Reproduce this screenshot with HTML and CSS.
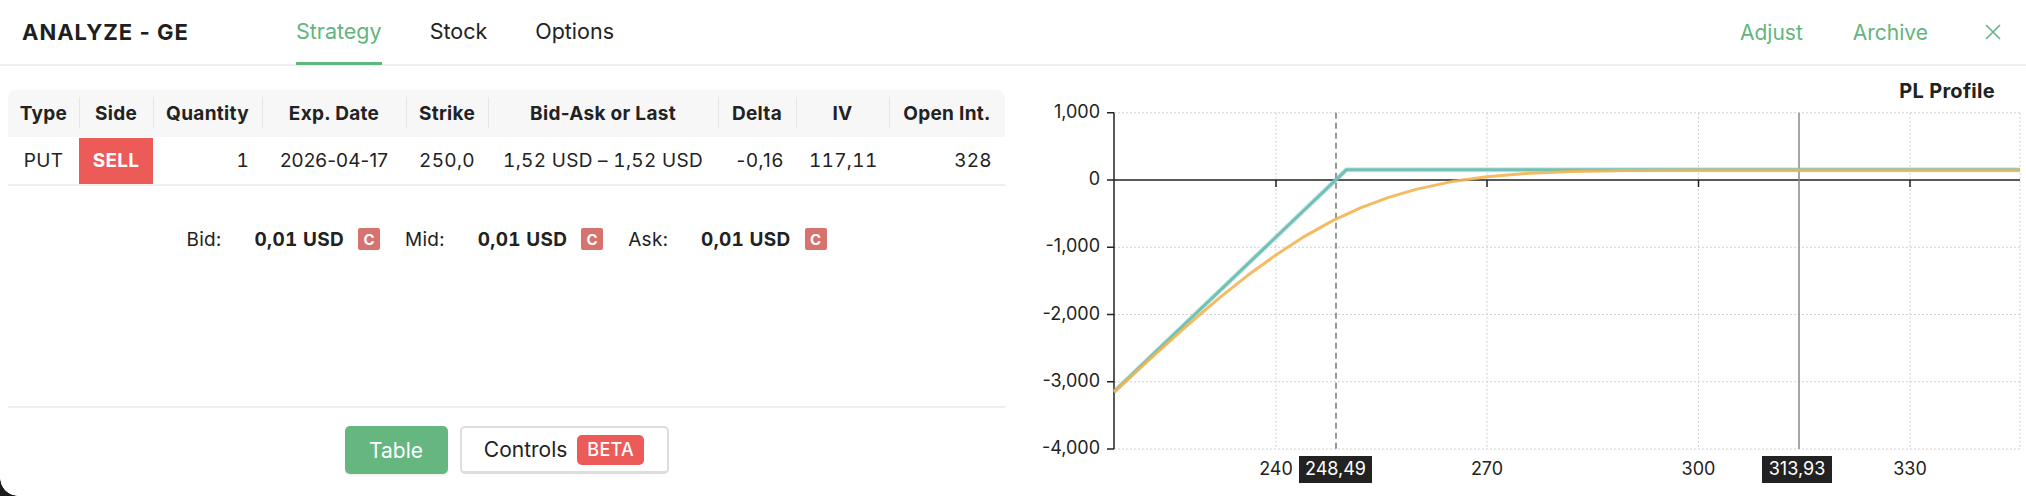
FILE: index.html
```html
<!DOCTYPE html>
<html>
<head>
<meta charset="utf-8">
<link rel="stylesheet" href="styles.css">
</head>
<body>
<div class="app">
  <header class="topbar">
    <div class="title">ANALYZE - GE</div>
    <nav class="tabs">
      <a class="tab active">Strategy</a>
      <a class="tab">Stock</a>
      <a class="tab">Options</a>
    </nav>
    <div class="actions">
      <a class="action">Adjust</a>
      <a class="action">Archive</a>
      <a class="close" aria-label="close">
        <svg width="16" height="16" viewBox="0 0 16 16"><path d="M1 1 L15 15 M15 1 L1 15" stroke="#62b57e" stroke-width="1.6" fill="none"/></svg>
      </a>
    </div>
  </header>
  <main class="main">
    <section class="left">
      <table class="legs">
        <colgroup>
          <col class="c-type"><col class="c-side"><col class="c-qty"><col class="c-date"><col class="c-strike"><col class="c-bidask"><col class="c-delta"><col class="c-iv"><col class="c-oi">
        </colgroup>
        <thead>
          <tr>
            <th>Type</th><th class="sep">Side</th><th class="sep">Quantity</th><th class="sep">Exp. Date</th><th class="sep">Strike</th><th class="sep">Bid-Ask or Last</th><th class="sep">Delta</th><th class="sep">IV</th><th class="sep">Open Int.</th>
          </tr>
        </thead>
        <tbody>
          <tr>
            <td class="center">PUT</td>
            <td class="sell">SELL</td>
            <td class="right">1</td>
            <td class="center date">2026-04-17</td>
            <td class="right">250,0</td>
            <td class="center">1,52 USD – 1,52 USD</td>
            <td class="right delta">-0,16</td>
            <td class="right iv">117,11</td>
            <td class="right">328</td>
          </tr>
        </tbody>
      </table>
      <div class="quotes">
        <span class="qlabel">Bid:</span><span class="qval">0,01 USD</span><span class="cbadge">C</span>
        <span class="qlabel">Mid:</span><span class="qval">0,01 USD</span><span class="cbadge">C</span>
        <span class="qlabel">Ask:</span><span class="qval">0,01 USD</span><span class="cbadge">C</span>
      </div>
      <div class="footer">
        <button class="btn btn-primary">Table</button>
        <button class="btn btn-outline">Controls <span class="beta">BETA</span></button>
      </div>
    </section>
    <section class="chart">
      <svg class="plot" width="1006" height="430" viewBox="1020 66 1006 430">
        <text class="chart-title" x="1995" y="93">PL Profile</text>
        <g class="grid">
          <line x1="1114" y1="112.75" x2="2020" y2="112.75"/>
          <line x1="1114" y1="247.25" x2="2020" y2="247.25"/>
          <line x1="1114" y1="314.5" x2="2020" y2="314.5"/>
          <line x1="1114" y1="381.75" x2="2020" y2="381.75"/>
          <line x1="1114" y1="449" x2="2020" y2="449"/>
          <line x1="1276" y1="112.75" x2="1276" y2="449"/>
          <line x1="1487" y1="112.75" x2="1487" y2="449"/>
          <line x1="1698.5" y1="112.75" x2="1698.5" y2="449"/>
          <line x1="1910" y1="112.75" x2="1910" y2="449"/>
          <line x1="2020" y1="112.75" x2="2020" y2="449"/>
        </g>
        <g class="axis">
          <line x1="1114" y1="112.75" x2="1114" y2="449"/>
          <line x1="1114" y1="180" x2="2020" y2="180"/>
          <line x1="1107" y1="112.75" x2="1114" y2="112.75"/>
          <line x1="1107" y1="180" x2="1114" y2="180"/>
          <line x1="1107" y1="247.25" x2="1114" y2="247.25"/>
          <line x1="1107" y1="314.5" x2="1114" y2="314.5"/>
          <line x1="1107" y1="381.75" x2="1114" y2="381.75"/>
          <line x1="1107" y1="449" x2="1114" y2="449"/>
          <line x1="1276" y1="180" x2="1276" y2="187"/>
          <line x1="1487" y1="180" x2="1487" y2="187"/>
          <line x1="1698.5" y1="180" x2="1698.5" y2="187"/>
          <line x1="1910" y1="180" x2="1910" y2="187"/>
        </g>
        <g class="ylabels">
          <text x="1100" y="113">1,000</text>
          <text x="1100" y="180">0</text>
          <text x="1100" y="247">-1,000</text>
          <text x="1100" y="315">-2,000</text>
          <text x="1100" y="382">-3,000</text>
          <text x="1100" y="449">-4,000</text>
        </g>
        <g class="xlabels">
          <text x="1276" y="470">240</text>
          <text x="1487" y="470">270</text>
          <text x="1698.5" y="470">300</text>
          <text x="1910" y="470">330</text>
        </g>
        <line class="breakeven" x1="1336" y1="112.75" x2="1336" y2="449"/>
        <line class="spot" x1="1799" y1="112.75" x2="1799" y2="449"/>
        <path class="teal-halo" d="M1114,391.7 L1346.4,169.8 L2020,169.8"/>
        <path class="teal" d="M1114,391.7 L1346.4,169.8 L2020,169.8"/>
        <path class="orange" d="M1114,392.2 L1149.3,359.6 L1184.5,327.8 L1219.7,297.7 L1247.8,275.3 L1276,254.9 L1304.2,236.6 L1332.3,220.9 L1360.5,207.8 L1388.6,197.4 L1416.8,189.1 L1452,181.6 L1487,176.8 L1529.4,173.3 L1571.7,171.4 L1628,170.5 L1698.5,170.3 L2020,170.3"/>
        <g class="marker">
          <rect x="1299" y="456" width="73" height="27"/>
          <text x="1335.5" y="470">248,49</text>
          <rect x="1762" y="456" width="70" height="27"/>
          <text x="1797" y="470">313,93</text>
        </g>
      </svg>
    </section>
  </main>
  <div class="corner"></div>
</div>
</body>
</html>
```

FILE: styles.css
```css
* { box-sizing: border-box; }
html, body { margin: 0; padding: 0; background: #fff; }
body {
  font-family: Inter, "Noto Sans", "Liberation Sans", sans-serif;
  color: #222;
  width: 2026px;
  height: 496px;
  overflow: hidden;
}
.app { position: relative; width: 2026px; height: 496px; display: flex; flex-direction: column; }

.topbar {
  height: 66px;
  flex: none;
  display: flex;
  align-items: flex-start;
  border-bottom: 2px solid #eeeeee;
  padding: 0 25px 0 22px;
}
.title {
  font-size: 22px;
  font-weight: 700;
  letter-spacing: 1px;
  line-height: 64px;
  width: 274px;
  color: #1f1f1f;
}
.tabs { display: flex; gap: 48px; }
.tab {
  display: block;
  height: 65px;
  line-height: 62px;
  font-size: 21.5px;
  color: #222;
  border-bottom: 3px solid transparent;
}
.tab.active { color: #62b57e; border-bottom-color: #62b57e; }
.actions { margin-left: auto; display: flex; align-items: center; height: 64px; }
.action { font-size: 21px; color: #62b57e; margin-right: 50px; }
.action + .action { margin-right: 57px; }
.close { display: flex; align-items: center; }

.main { flex: 1; display: flex; min-height: 0; }
.left {
  width: 1020px;
  padding: 24px 15px 22px 8px;
  display: flex;
  flex-direction: column;
}
.legs {
  width: 997px;
  border-collapse: collapse;
  table-layout: fixed;
  font-size: 19px;
  letter-spacing: 0.3px;
  font-variant-numeric: tabular-nums;
}
.c-type { width: 71px; } .c-side { width: 74px; } .c-qty { width: 109px; }
.c-date { width: 144px; } .c-strike { width: 82px; } .c-bidask { width: 230px; }
.c-delta { width: 78px; } .c-iv { width: 93px; } .c-oi { width: 116px; }
.legs thead th {
  background: #f7f7f7;
  height: 47px;
  font-weight: 700;
  font-variant-numeric: normal;
  text-align: center;
  padding: 0;
  position: relative;
  white-space: nowrap;
}
.legs thead th:first-child { border-top-left-radius: 8px; }
.legs thead th:last-child { border-top-right-radius: 8px; }
.legs thead th.sep::before {
  content: "";
  position: absolute;
  left: 0;
  top: 7px;
  bottom: 9px;
  width: 1px;
  background: #e6e6e6;
}
.legs tbody td {
  height: 48px;
  padding: 0 13px;
  border-top: 1px solid #fff;
  border-bottom: 2px solid #eeeeee;
  white-space: nowrap;
}
.center { text-align: center; }
.right { text-align: right; }
.legs tbody td.date { font-variant-numeric: normal; letter-spacing: 0.1px; }
.legs tbody td.delta { font-variant-numeric: normal; letter-spacing: 0.8px; padding-right: 12px; }
.legs tbody td.iv { padding-right: 16px; }
.legs tbody td.sell {
  background: #ec5b57;
  color: #fff;
  font-weight: 700;
  text-align: center;
  padding: 0;
}

.quotes {
  margin-top: 38px;
  height: 30px;
  display: flex;
  align-items: center;
  justify-content: center;
  font-size: 19px;
  letter-spacing: 0.3px;
  font-variant-numeric: tabular-nums;
}
.qlabel { margin-right: 33px; }
.qval { font-weight: 700; margin-right: 14px; }
.cbadge {
  width: 22px; height: 22px;
  background: #d7736e;
  color: #fff;
  font-weight: 700;
  font-size: 15px;
  letter-spacing: 0;
  display: inline-flex; align-items: center; justify-content: center;
  border-radius: 2px;
  margin-right: 25px;
}
.cbadge:last-child { margin-right: 0; }

.footer {
  margin-top: auto;
  border-top: 2px solid #eeeeee;
  padding-top: 18px;
  display: flex;
  justify-content: center;
  gap: 12px;
}
.btn {
  height: 48px;
  font-family: inherit;
  font-size: 21px;
  border-radius: 5px;
  display: inline-flex; align-items: center; justify-content: center;
  padding: 0;
}
.btn-primary {
  width: 103px;
  background: #65b77f;
  border: none;
  color: #fff;
  box-shadow: 0 2px 2px rgba(0,0,0,0.06);
}
.btn-outline {
  width: 209px;
  background: #fff;
  border: 2px solid #dddddd;
  border-bottom-width: 3px;
  color: #222;
  gap: 10px;
}
.beta {
  background: #ec5b57;
  color: #fff;
  font-size: 18px;
  font-weight: 500;
  height: 30px;
  padding: 0 10px;
  border-radius: 5px;
  display: inline-flex; align-items: center;
  letter-spacing: 0.3px;
}

.chart { flex: 1; }
.plot { display: block; }
.chart-title { font-size: 20px; font-weight: 700; letter-spacing: 0.3px; text-anchor: end; dominant-baseline: middle; fill: #222; }
.grid line { stroke: #d0d0d0; stroke-width: 1; stroke-dasharray: 2 2; }
.axis line { stroke: #222; stroke-width: 1.5; }
.ylabels text { font-size: 18px; text-anchor: end; dominant-baseline: middle; fill: #222; }
.xlabels text { font-size: 18px; text-anchor: middle; dominant-baseline: middle; fill: #222; }
.breakeven { stroke: #777; stroke-width: 1.5; stroke-dasharray: 6 4; }
.spot { stroke: #888; stroke-width: 1.5; }
.teal-halo { fill: none; stroke: #72c1b5; stroke-opacity: 0.35; stroke-width: 5; }
.teal { fill: none; stroke: #72c1b5; stroke-width: 3; }
.orange { fill: none; stroke: #f3b451; stroke-width: 3; stroke-opacity: 0.9; stroke-linejoin: round; }
.marker rect { fill: #222; }
.marker text { font-size: 18px; fill: #fff; text-anchor: middle; dominant-baseline: middle; }

.corner {
  position: absolute;
  left: 0; bottom: 0;
  width: 18px; height: 18px;
  background: radial-gradient(circle at 100% 0, transparent 17.5px, #1c1c1c 18px);
}
```
